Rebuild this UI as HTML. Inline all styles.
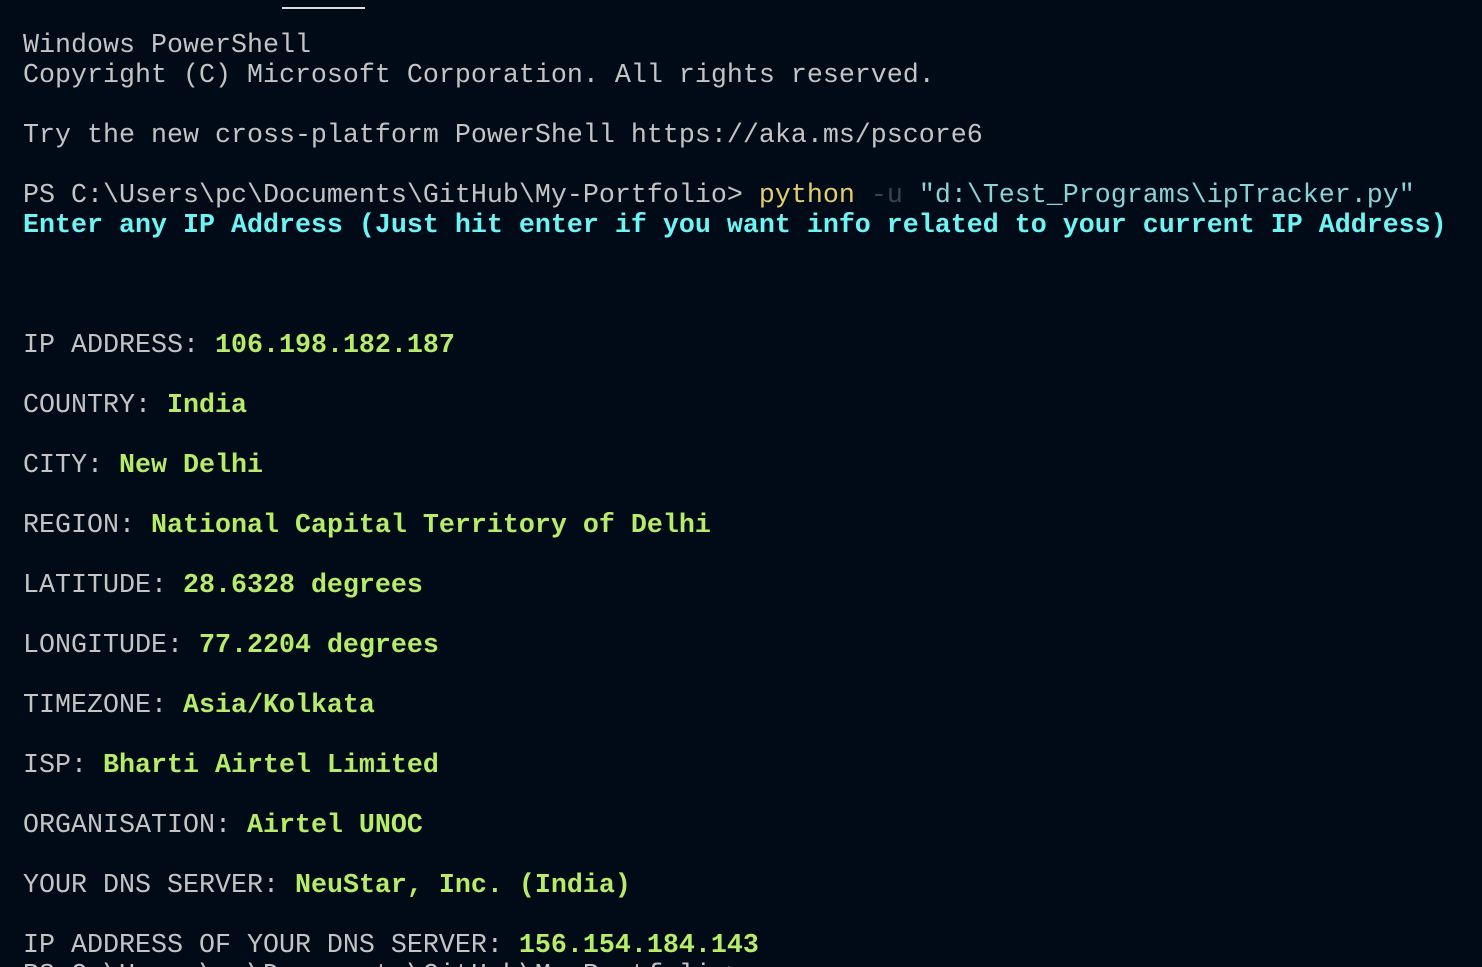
<!DOCTYPE html>
<html><head><meta charset="utf-8"><style>
html,body{margin:0;padding:0;background:#010b18;width:1482px;height:967px;overflow:hidden}
.wrap{position:relative;width:1482px;height:967px;overflow:hidden;background:#010b18}
pre{margin:0;position:absolute;left:23px;top:31px;font-family:"Liberation Mono",monospace;font-size:26.67px;line-height:30px;color:#c4c4c4;white-space:pre}
.y{color:#e5cd6d}.d{color:#3a4450}.c{color:#8ad3d6}.cy{color:#6ef4f4;font-weight:bold}.g{color:#b7eb6a;font-weight:bold}
.bar{position:absolute;left:282px;top:7px;width:83px;height:2px;background:#ddd}
</style></head><body><div class="wrap">
<div class="bar"></div>
<pre>Windows PowerShell
Copyright (C) Microsoft Corporation. All rights reserved.

Try the new cross-platform PowerShell https://aka.ms/pscore6

PS C:\Users\pc\Documents\GitHub\My-Portfolio&gt; <span class="y">python</span> <span class="d">-u</span> <span class="c">"d:\Test_Programs\ipTracker.py"</span>
<span class="cy">Enter any IP Address (Just hit enter if you want info related to your current IP Address)</span>



IP ADDRESS: <span class="g">106.198.182.187</span>

COUNTRY: <span class="g">India</span>

CITY: <span class="g">New Delhi</span>

REGION: <span class="g">National Capital Territory of Delhi</span>

LATITUDE: <span class="g">28.6328 degrees</span>

LONGITUDE: <span class="g">77.2204 degrees</span>

TIMEZONE: <span class="g">Asia/Kolkata</span>

ISP: <span class="g">Bharti Airtel Limited</span>

ORGANISATION: <span class="g">Airtel UNOC</span>

YOUR DNS SERVER: <span class="g">NeuStar, Inc. (India)</span>

IP ADDRESS OF YOUR DNS SERVER: <span class="g">156.154.184.143</span>
PS C:\Users\pc\Documents\GitHub\My-Portfolio&gt;</pre>
</div></body></html>
